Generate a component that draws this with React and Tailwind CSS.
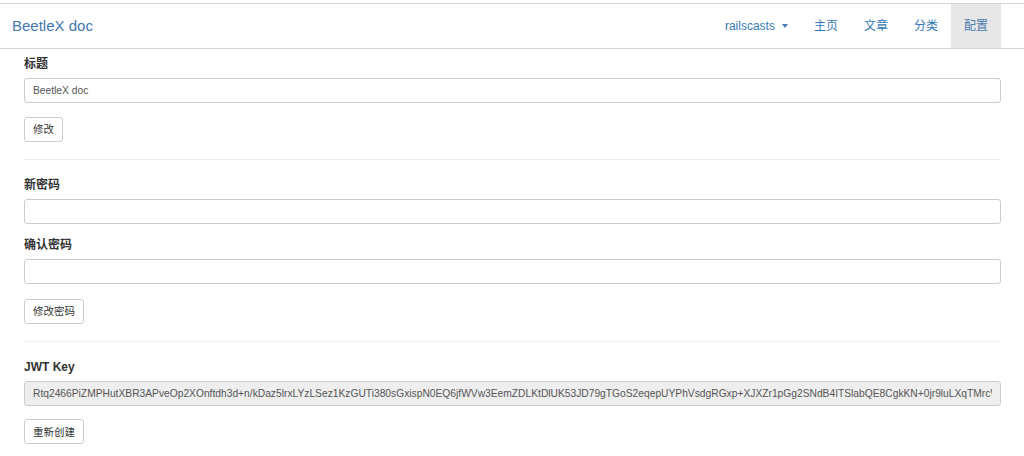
import { useState } from 'react';

const jwtKey =
  'Rtq2466PiZMPHutXBR3APveOp2XOnftdh3d+n/kDaz5lrxLYzLSez1KzGUTi380sGxispN0EQ6jfWVw3EemZDLKtDlUK53JD79gTGoS2eqepUYPhVsdgRGxp+XJXZr1pGg2SNdB4ITSlabQE8CgkKN+0jr9luLXqTMrcW4pQz8VfA';

const font = { fontFamily: '"Liberation Sans", Arial, "Noto Sans CJK SC", sans-serif' };

function Label({ children }) {
  return <div className="text-[12px] leading-[17px] font-bold text-[#333] mb-[5px]">{children}</div>;
}

function Input({ value, onChange, readOnly }) {
  return (
    <input
      value={value}
      onChange={onChange}
      readOnly={readOnly}
      className={`block w-full h-[25px] px-[8px] border border-[#ccc] rounded-[3px] text-[10.25px] text-[#555] outline-none ${
        readOnly ? 'bg-[#eee]' : 'bg-white'
      }`}
      style={font}
    />
  );
}

function Button({ children }) {
  return (
    <button className="h-[25px] px-[8px] border border-[#ccc] rounded-[3px] bg-white text-[10.5px] text-[#333] leading-none hover:bg-[#e6e6e6]">
      {children}
    </button>
  );
}

export default function App() {
  const [title, setTitle] = useState('BeetleX doc');
  const [pwd, setPwd] = useState('');
  const [pwd2, setPwd2] = useState('');

  const links = ['主页', '文章', '分类', '配置'];

  return (
    <div className="bg-white min-h-[456px] pt-[3px]" style={font}>
      <nav className="h-[46px] border-y border-[#d4d4d4] flex items-stretch justify-between pl-[12px] pr-[23px]">
        <a className="flex items-center text-[15px] text-[#3f78b2]">BeetleX doc</a>
        <ul className="flex items-stretch text-[12px] text-[#337ab7]">
          <li className="flex items-center px-[13px]">
            railscasts
            <span className="ml-[7px] inline-block w-0 h-0 border-t-[4px] border-t-[#4a7db3] border-x-[3.5px] border-x-transparent" />
          </li>
          {links.map(l => (
            <li key={l} className={`flex items-center px-[13px] ${l === '配置' ? 'bg-[#e7e7e7] text-[#4a7ab0]' : ''}`}>
              {l}
            </li>
          ))}
        </ul>
      </nav>

      <div className="pl-[24px] pr-[23px] pt-[7px]">
        <Label>标题</Label>
        <Input value={title} onChange={e => setTitle(e.target.value)} />
        <div className="mt-[13px]">
          <Button>修改</Button>
        </div>

        <div className="my-[17px] border-t border-[#eee]" />

        <Label>新密码</Label>
        <Input value={pwd} onChange={e => setPwd(e.target.value)} />
        <div className="mt-[13px]">
          <Label>确认密码</Label>
          <Input value={pwd2} onChange={e => setPwd2(e.target.value)} />
        </div>
        <div className="mt-[14px]">
          <Button>修改密码</Button>
        </div>

        <div className="my-[17px] border-t border-[#eee]" />

        <Label>JWT Key</Label>
        <Input value={jwtKey} readOnly />
        <div className="mt-[13px]">
          <Button>重新创建</Button>
        </div>
      </div>
    </div>
  );
}
